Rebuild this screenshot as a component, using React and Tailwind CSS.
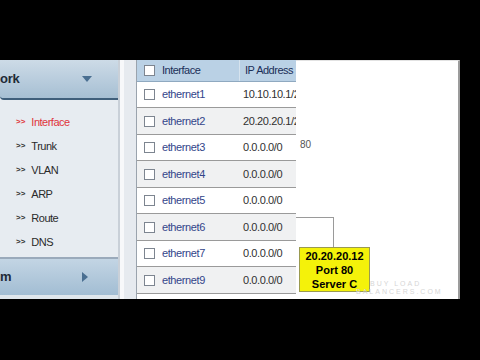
const menu = ["Interface", "Trunk", "VLAN", "ARP", "Route", "DNS"];

const rows = [
  { name: "ethernet1", ip: "10.10.10.1/24" },
  { name: "ethernet2", ip: "20.20.20.1/24" },
  { name: "ethernet3", ip: "0.0.0.0/0" },
  { name: "ethernet4", ip: "0.0.0.0/0" },
  { name: "ethernet5", ip: "0.0.0.0/0" },
  { name: "ethernet6", ip: "0.0.0.0/0" },
  { name: "ethernet7", ip: "0.0.0.0/0" },
  { name: "ethernet9", ip: "0.0.0.0/0" },
];

function Box() {
  return <span className="block w-[11px] h-[11px] border border-[#7d8590] bg-white shrink-0" />;
}

export default function App() {
  return (
    <div
      className="w-[480px] h-[360px] bg-black pt-[60px] overflow-hidden"
      style={{ fontFamily: '"Liberation Sans", Arial, sans-serif' }}
    >
      <div className="flex w-[460px] h-[239px] bg-white">
        {/* sidebar */}
        <aside className="w-[120px] shrink-0 flex flex-col bg-[#e7ecf1] border-r-2 border-[#c9d0d8]">
          <div className="h-[40px] flex items-center justify-between pr-[26px] bg-gradient-to-b from-[#cddbe7] to-[#a6bfd3] border-b-2 border-[#3f5f7b] rounded-bl-[4px]">
            <span className="text-[13px] font-bold text-[#1e2a36] tracking-[-0.3px]">ork</span>
            <span className="w-0 h-0 border-l-[5px] border-r-[5px] border-t-[6px] border-l-transparent border-r-transparent border-t-[#4a6f91]" />
          </div>
          <ul className="flex flex-col pt-[10px] flex-1">
            {menu.map((m, i) => (
              <li key={m} className="h-[24px] flex items-center gap-[6px] pl-[16px]">
                <span className={`text-[8px] font-bold ${i === 0 ? "text-[#e0343c]" : "text-[#333]"}`}>&gt;&gt;</span>
                <span className={`text-[11px] tracking-[-0.5px] ${i === 0 ? "text-[#e0343c]" : "text-[#2a2a2a]"}`}>{m}</span>
              </li>
            ))}
          </ul>
          <div className="h-[38px] flex items-center justify-between pr-[30px] bg-gradient-to-b from-[#c3d5e4] to-[#a2bdd3] border-t-2 border-[#9aaabb]">
            <span className="text-[13px] font-bold text-[#1e2a36]">m</span>
            <span className="w-0 h-0 border-t-[5px] border-b-[5px] border-l-[6px] border-t-transparent border-b-transparent border-l-[#4a6f91]" />
          </div>
          <div className="h-[4px] bg-[#dfe6ec]" />
        </aside>

        {/* gutter */}
        <div className="w-[16px] shrink-0 bg-[#e6eaef] border-l-[4px] border-[#f7f8fa]" />

        {/* table */}
        <div className="w-[160px] shrink-0 flex flex-col border-l border-[#9aa3ad] bg-white overflow-hidden">
          <div className="h-[22px] shrink-0 flex items-center bg-[#bad1e5] border-b border-[#8fa9c0]">
            <div className="w-[25px] shrink-0 flex justify-center"><Box /></div>
            <span className="w-[77px] shrink-0 text-[11px] text-[#1b2f58] tracking-[-0.5px]">Interface</span>
            <span className="h-full flex items-center pl-[5px] border-l border-[#d6e3ee] text-[11px] text-[#1b2f58] tracking-[-0.5px] whitespace-nowrap">IP Address</span>
          </div>
          {rows.map((r, i) => (
            <div
              key={r.name}
              className={`${i % 2 === 1 ? "h-[27px] bg-[#f0f1f2]" : "h-[26px] bg-white"} shrink-0 flex items-center border-b border-[#9a9a9a]`}
            >
              <div className="w-[25px] shrink-0 flex justify-center"><Box /></div>
              <span className="w-[81px] shrink-0 text-[11px] text-[#33458a] tracking-[-0.4px]">{r.name}</span>
              <span className="text-[11px] text-[#303030] tracking-[-0.4px] whitespace-nowrap">{r.ip}</span>
            </div>
          ))}
        </div>

        {/* diagram canvas */}
        <div className="relative flex-1 bg-white border-t border-[#e2e2e2] border-r-2 border-r-[#9c9c9c]">
          <span className="absolute left-[4px] top-[76px] text-[10px] text-[#555]">80</span>
          <div className="absolute left-0 top-[156px] w-[38px] h-[30px] border-t border-r border-[#9a9a9a]" />
          <div className="absolute left-[3px] top-[186px] w-[71px] h-[45px] bg-[#f4f20a] border border-[#9a9a50] flex flex-col items-center justify-center leading-[14px] text-[11px] font-bold text-black">
            <span>20.20.20.12</span>
            <span>Port 80</span>
            <span>Server C</span>
          </div>
          <div className="absolute left-[60px] top-[219px] flex flex-col text-[7px] leading-[8px] tracking-[2px] text-[#d6d6d6]">
            <span className="pl-[14px]">BUY LOAD</span>
            <span>BALANCERS.COM</span>
          </div>
        </div>
      </div>
    </div>
  );
}
